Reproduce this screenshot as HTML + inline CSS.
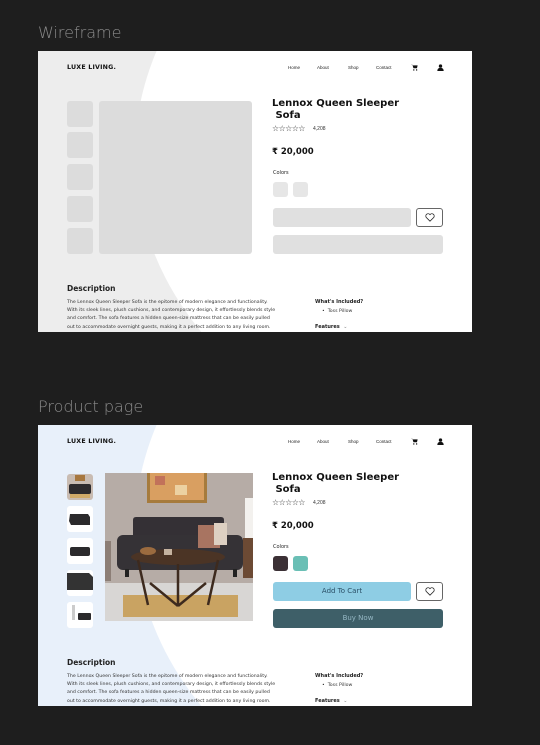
<!DOCTYPE html>
<html><head><meta charset="utf-8"><style>
*{margin:0;padding:0;box-sizing:border-box}
html,body{width:540px;height:745px;overflow:hidden}
body{background:#1e1e1e;position:relative;font-family:"Liberation Sans",sans-serif}
.lbl{position:absolute;left:38px;font-size:16px;color:#8c8c8c;font-family:"DejaVu Sans","Liberation Sans",sans-serif;font-weight:300}
.fr{position:absolute;left:38px;width:434px;height:281px;overflow:hidden;background:#ededed}
.fr.p{background:#e8f0fa}
.fr *{position:absolute}
.ell{left:97px;top:-217px;width:800px;height:642px;border-radius:50%;background:#fff}
.logo{left:29px;top:13px;font-size:6.3px;font-weight:bold;color:#111;letter-spacing:.2px;font-family:"DejaVu Sans",sans-serif}
.nav{top:14px;font-size:4.5px;color:#222}
.th{left:29px;width:26px;height:26px;border-radius:3px;background:#dcdcdc}
.title{left:234px;top:47px;font-size:10px;font-weight:bold;color:#111;line-height:11.5px;font-family:"DejaVu Sans",sans-serif;white-space:pre}
.stars{left:234px;top:73px;font-size:8px;color:#333;letter-spacing:-.6px;font-family:"DejaVu Sans",sans-serif}
.rev{left:275px;top:75px;font-size:5px;color:#333}
.price{left:234px;top:96px;font-size:8.5px;font-weight:bold;color:#111;font-family:"DejaVu Sans",sans-serif}
.col{left:235px;top:119px;font-size:5px;color:#222;font-family:"DejaVu Sans",sans-serif}
.sw{top:131px;width:15px;height:15px;border-radius:3px}
.btn{left:235px;top:157px;width:138px;height:19px;border-radius:3px;font-size:7px;text-align:center;line-height:19px;font-family:"DejaVu Sans",sans-serif}
.heart{left:378px;top:157px;width:27px;height:19px;border:1px solid #666;border-radius:3px;background:#fff}
.buy{left:235px;top:184px;width:170px;height:19px;border-radius:3px;font-size:7px;text-align:center;line-height:19px;font-family:"DejaVu Sans",sans-serif}
.dh{left:29px;top:233px;font-size:7.5px;font-weight:bold;color:#222;font-family:"DejaVu Sans",sans-serif}
.dp{left:29px;top:248px;white-space:nowrap;font-size:4.7px;line-height:8.2px;color:#333;font-family:"DejaVu Sans",sans-serif}
.wi{left:277px;top:248px;font-size:5px;font-weight:bold;color:#222;font-family:"DejaVu Sans",sans-serif}
.tp{left:284px;top:258px;font-size:4.7px;color:#333;font-family:"DejaVu Sans",sans-serif}
.fe{left:277px;top:273px;font-size:5px;font-weight:bold;color:#222;font-family:"DejaVu Sans",sans-serif}
</style></head><body>
<div class="lbl" style="top:23px">Wireframe</div>
<div class="lbl" style="top:397px">Product page</div>

<div class="fr" style="top:51px">
<div class="ell"></div>
<div class="logo">LUXE LIVING.</div>
<div class="nav" style="left:250px">Home</div><div class="nav" style="left:279px">About</div><div class="nav" style="left:310px">Shop</div><div class="nav" style="left:338px">Contact</div>
<svg style="left:373px;top:13px" width="7" height="7" viewBox="0 0 10 10"><path d="M0 1h2l1.5 5h5l1-4H3" fill="#111"/><circle cx="4" cy="8.5" r="1" fill="#111"/><circle cx="8" cy="8.5" r="1" fill="#111"/></svg>
<svg style="left:399px;top:13px" width="7" height="7" viewBox="0 0 10 10"><circle cx="5" cy="3" r="2.4" fill="#111"/><path d="M0.5 10c0-3.5 2-4.5 4.5-4.5s4.5 1 4.5 4.5z" fill="#111"/></svg>
<div class="th" style="top:50px"></div><div class="th" style="top:81px"></div><div class="th" style="top:113px"></div><div class="th" style="top:145px"></div><div class="th" style="top:177px"></div>
<div style="left:61px;top:50px;width:153px;height:153px;border-radius:3px;background:#dcdcdc"></div>
<div class="title">Lennox Queen Sleeper
 Sofa</div>
<div class="stars">☆☆☆☆☆</div><div class="rev">4,208</div>
<div class="price">₹ 20,000</div>
<div class="col">Colors</div>
<div class="sw" style="left:235px;background:#e6e6e6"></div><div class="sw" style="left:255px;background:#e6e6e6"></div>
<div class="btn" style="background:#e0e0e0"></div>
<div class="heart"><svg style="left:8px;top:4px" width="10" height="9" viewBox="0 0 12 11"><path d="M6 10L1.5 5.5A2.7 2.7 0 0 1 6 2a2.7 2.7 0 0 1 4.5 3.5z" fill="none" stroke="#222" stroke-width="1"/></svg></div>
<div class="buy" style="background:#e0e0e0"></div>
<div class="dh">Description</div>
<div class="dp">The Lennox Queen Sleeper Sofa is the epitome of modern elegance and functionality.<br>With its sleek lines, plush cushions, and contemporary design, it effortlessly blends style<br>and comfort. The sofa features a hidden queen-size mattress that can be easily pulled<br>out to accommodate overnight guests, making it a perfect addition to any living room.</div>
<div class="wi">What's Included?</div><div class="tp">•&nbsp; Toss Pillow</div><div class="fe">Features &nbsp;<span style="position:static;color:#999">⌄</span></div>
</div>

<div class="fr p" style="top:425px">
<div class="ell"></div>
<div class="logo">LUXE LIVING.</div>
<div class="nav" style="left:250px">Home</div><div class="nav" style="left:279px">About</div><div class="nav" style="left:310px">Shop</div><div class="nav" style="left:338px">Contact</div>
<svg style="left:373px;top:13px" width="7" height="7" viewBox="0 0 10 10"><path d="M0 1h2l1.5 5h5l1-4H3" fill="#111"/><circle cx="4" cy="8.5" r="1" fill="#111"/><circle cx="8" cy="8.5" r="1" fill="#111"/></svg>
<svg style="left:399px;top:13px" width="7" height="7" viewBox="0 0 10 10"><circle cx="5" cy="3" r="2.4" fill="#111"/><path d="M0.5 10c0-3.5 2-4.5 4.5-4.5s4.5 1 4.5 4.5z" fill="#111"/></svg>
<svg style="left:29px;top:49px" width="26" height="155" viewBox="0 0 26 155">
<rect x="0" y="0" width="26" height="26" rx="3" fill="#c9bcb2"/><rect x="8" y="1" width="10" height="6" fill="#a7773e"/><rect x="2" y="10" width="22" height="10" rx="2" fill="#2e2b2d"/><rect x="3" y="20" width="20" height="4" fill="#d0aa68"/>
<rect x="0" y="32" width="26" height="26" rx="3" fill="#fff"/><path d="M3 40h18l2 3v8H4l-2-4z" fill="#2b2a2c"/>
<rect x="0" y="64" width="26" height="26" rx="3" fill="#fff"/><rect x="3" y="73" width="20" height="9" rx="2" fill="#2b2a2c"/>
<rect x="0" y="96" width="26" height="26" rx="3" fill="#fff"/><path d="M0 99h22l4 4v13H0z" fill="#333"/>
<rect x="0" y="128" width="26" height="26" rx="3" fill="#fff"/><rect x="5" y="131" width="3" height="15" fill="#ccc"/><rect x="11" y="139" width="13" height="7" rx="1" fill="#2b2a2c"/>
</svg>
<svg style="left:67px;top:48px" width="148" height="148" viewBox="0 0 148 148">
<rect width="148" height="148" fill="#b6aca6"/><rect y="110" width="148" height="38" fill="#d8d6d4"/>
<rect x="42" y="0" width="60" height="30" fill="#a67b3d"/><rect x="45" y="0" width="54" height="27" fill="#d99f61"/><rect x="50" y="3" width="10" height="9" fill="#c2725a"/><rect x="70" y="12" width="12" height="10" fill="#ecd1a2"/>
<rect x="140" y="25" width="8" height="40" fill="#f3f1ee"/><rect x="138" y="65" width="10" height="40" fill="#6c4a34"/>
<rect x="0" y="68" width="6" height="40" fill="#8c7e76"/>
<path d="M28 47q0-3 3-3h85q3 0 3 3v18H28z" fill="#343035"/><rect x="12" y="62" width="126" height="35" rx="6" fill="#353236"/><rect x="20" y="96" width="4" height="8" fill="#222"/><rect x="128" y="96" width="4" height="8" fill="#222"/>
<rect x="93" y="52" width="22" height="23" fill="#a87461"/><rect x="109" y="50" width="13" height="22" fill="#ddd0c2"/>
<rect x="18" y="122" width="115" height="22" fill="#c9a362"/>
<ellipse cx="73" cy="84" rx="47" ry="8" fill="#4b3425"/><path d="M33 87l10 45M113 87l-10 45M45 110l28 23M101 110l-28 23M73 91v42" stroke="#3d2a1e" stroke-width="2.5" fill="none"/>
<ellipse cx="43" cy="78" rx="8" ry="4" fill="#9b6b3f"/><rect x="59" y="76" width="8" height="6" fill="#c5b3a0"/>
</svg>
<div class="title">Lennox Queen Sleeper
 Sofa</div>
<div class="stars">☆☆☆☆☆</div><div class="rev">4,208</div>
<div class="price">₹ 20,000</div>
<div class="col">Colors</div>
<div class="sw" style="left:235px;background:#3b3035"></div><div class="sw" style="left:255px;background:#6abfb5"></div>
<div class="btn" style="background:#8ecde4;color:#2a4f66">Add To Cart</div>
<div class="heart"><svg style="left:8px;top:4px" width="10" height="9" viewBox="0 0 12 11"><path d="M6 10L1.5 5.5A2.7 2.7 0 0 1 6 2a2.7 2.7 0 0 1 4.5 3.5z" fill="none" stroke="#222" stroke-width="1"/></svg></div>
<div class="buy" style="background:#3e5f68;color:#95b7c4">Buy Now</div>
<div class="dh">Description</div>
<div class="dp">The Lennox Queen Sleeper Sofa is the epitome of modern elegance and functionality.<br>With its sleek lines, plush cushions, and contemporary design, it effortlessly blends style<br>and comfort. The sofa features a hidden queen-size mattress that can be easily pulled<br>out to accommodate overnight guests, making it a perfect addition to any living room.</div>
<div class="wi">What's Included?</div><div class="tp">•&nbsp; Toss Pillow</div><div class="fe">Features &nbsp;<span style="position:static;color:#999">⌄</span></div>
</div>
</body></html>
